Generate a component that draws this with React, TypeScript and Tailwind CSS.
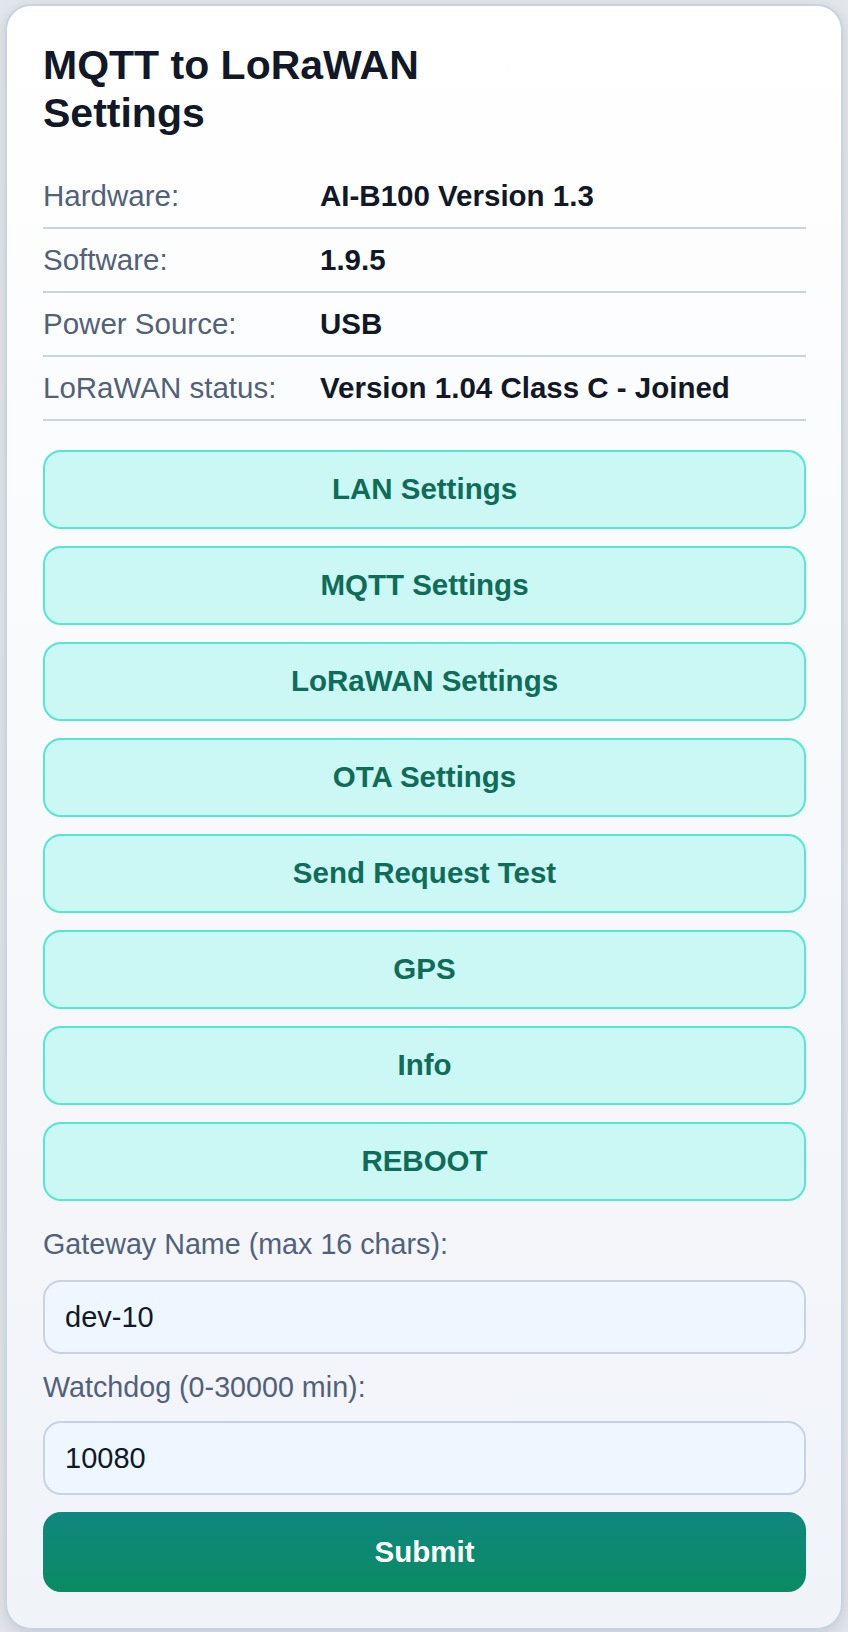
import React from "react";

const rows: [string, string][] = [
  ["Hardware:", "AI-B100 Version 1.3"],
  ["Software:", "1.9.5"],
  ["Power Source:", "USB"],
  ["LoRaWAN status:", "Version 1.04 Class C - Joined"],
];

const buttons = [
  "LAN Settings",
  "MQTT Settings",
  "LoRaWAN Settings",
  "OTA Settings",
  "Send Request Test",
  "GPS",
  "Info",
  "REBOOT",
];

export default function App() {
  return (
    <div className="min-h-[1632px] bg-[#e2e5ea] pt-[4px] px-[5px] font-['Liberation_Sans',Arial,sans-serif]">
      <div className="w-[838px] rounded-[26px] border-2 border-[#c8d2e0] bg-linear-to-b from-white to-[#f0f3f8] shadow-[0_4px_14px_rgba(0,0,0,0.12)] pl-[36px] pr-[35px] pt-[35px] pb-[36px]">
        <h1 className="max-w-[430px] text-[41px] leading-[48px] font-bold text-[#111827] mb-[28px]">
          MQTT to LoRaWAN Settings
        </h1>

        <div>
          {rows.map(([k, v]) => (
            <div
              key={k}
              className="grid grid-cols-[277px_1fr] py-[10px] leading-[42px] text-[29.5px] border-b-2 border-[#cad3df]"
            >
              <div className="text-[#52617a]">{k}</div>
              <div className="font-bold text-[#111827]">{v}</div>
            </div>
          ))}
        </div>

        <div className="mt-[29px] flex flex-col gap-[17px]">
          {buttons.map((b) => (
            <button
              key={b}
              className="h-[79px] w-full rounded-[18px] border-2 border-[#57e6cf] bg-[#cbf7f4] text-[29.5px] font-bold text-[#0e6c58]"
            >
              {b}
            </button>
          ))}
        </div>

        <div className="mt-[22px] text-[28.7px] leading-[42px] text-[#52617a] mb-[15px]">
          Gateway Name (max 16 chars):
        </div>
        <input
          defaultValue="dev-10"
          className="block h-[74px] w-full rounded-[18px] border-2 border-[#c8d2e0] bg-[#eef7ff] px-[20px] text-[29px] text-[#111827] outline-none mb-[12px]"
        />
        <div className="text-[28.7px] leading-[42px] text-[#52617a] mb-[13px]">
          Watchdog (0-30000 min):
        </div>
        <input
          defaultValue="10080"
          className="block h-[74px] w-full rounded-[18px] border-2 border-[#c8d2e0] bg-[#eef7ff] px-[20px] text-[29px] text-[#111827] outline-none mb-[17px]"
        />
        <button className="h-[80px] w-full rounded-[18px] bg-linear-to-b from-[#10877f] to-[#0b8b62] text-[29.5px] font-bold text-white">
          Submit
        </button>
      </div>
    </div>
  );
}
